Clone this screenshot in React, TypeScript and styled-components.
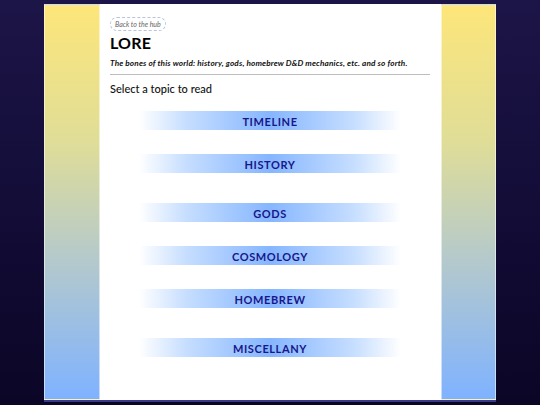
import styled, { createGlobalStyle } from 'styled-components';

const GlobalStyle = createGlobalStyle`
  html, body {
    margin: 0;
    padding: 0;
    height: 100%;
  }
  body {
    background: linear-gradient(180deg, #1c1547 0%, #130d38 50%, #0b0526 100%);
    font-family: Lato, 'Noto Sans', sans-serif;
    overflow: hidden;
  }
`;

const Page = styled.div`
  width: 452px;
  height: 396px;
  margin: 4px auto 0;
  display: grid;
  grid-template-columns: 56px 1fr 55px;
  border-bottom: 2px solid #3a3a8a;
`;

const Side = styled.div`
  background: linear-gradient(180deg, #fde67a 0%, #dfdd98 35%, #b4c9cc 65%, #7fb2ff 100%);
  border: 1px solid rgba(255, 255, 255, 0.55);
  box-sizing: border-box;
`;

const Main = styled.main`
  background: #fff;
  padding: 13px 11px 0 10px;
  display: flex;
  flex-direction: column;
`;

const BackLink = styled.a`
  align-self: flex-start;
  font-size: 7px;
  font-style: italic;
  color: #666;
  border: 1px dashed #b8c4dc;
  border-radius: 8px;
  padding: 2px 4px 2px;
  line-height: 8px;
  text-decoration: none;
`;

const Title = styled.h1`
  margin: 3px 0 0;
  font-size: 16px;
  font-weight: 700;
  color: #000;
  line-height: 18px;
  letter-spacing: 0.2px;
`;

const Subtitle = styled.p`
  margin: 6px 0 0;
  font-size: 8.2px;
  font-style: italic;
  font-weight: 700;
  color: #111;
  line-height: 10px;
  letter-spacing: 0.15px;
`;

const Rule = styled.hr`
  margin: 6px 0 0;
  border: none;
  border-top: 1px solid #bdbdbd;
`;

const Prompt = styled.h2`
  margin: 7px 0 0;
  font-size: 11px;
  font-weight: 500;
  color: #111;
  line-height: 14px;
`;

const Topics = styled.nav`
  display: flex;
  flex-direction: column;
  align-items: center;
  margin-top: 15px;
`;

const Group = styled.div<{ $gap: number }>`
  display: flex;
  flex-direction: column;
  align-items: center;
  gap: 24px;
  margin-top: ${p => p.$gap}px;
`;

const Topic = styled.a`
  width: 262px;
  height: 19px;
  display: flex;
  align-items: center;
  justify-content: center;
  background: linear-gradient(
    90deg,
    rgba(127, 178, 255, 0) 0%,
    rgba(160, 200, 255, 0.6) 18%,
    #86b6ff 50%,
    rgba(160, 200, 255, 0.6) 82%,
    rgba(127, 178, 255, 0) 100%
  );
  color: #17178a;
  font-size: 11px;
  font-weight: 700;
  letter-spacing: 0.6px;
  text-decoration: none;
  padding-top: 1px;
  box-sizing: border-box;
`;

const groups = [
  ['TIMELINE', 'HISTORY'],
  ['GODS', 'COSMOLOGY', 'HOMEBREW'],
  ['MISCELLANY'],
];

function App() {
  return (
    <>
      <GlobalStyle />
      <Page>
        <Side />
        <Main>
          <BackLink href="#">Back to the hub</BackLink>
          <Title>LORE</Title>
          <Subtitle>
            The bones of this world: history, gods, homebrew D&amp;D mechanics, etc. and so forth.
          </Subtitle>
          <Rule />
          <Prompt>Select a topic to read</Prompt>
          <Topics>
            {groups.map((items, i) => (
              <Group key={i} $gap={i === 0 ? 0 : 30}>
                {items.map(t => (
                  <Topic key={t} href="#">{t}</Topic>
                ))}
              </Group>
            ))}
          </Topics>
        </Main>
        <Side />
      </Page>
    </>
  );
}

export default App;
